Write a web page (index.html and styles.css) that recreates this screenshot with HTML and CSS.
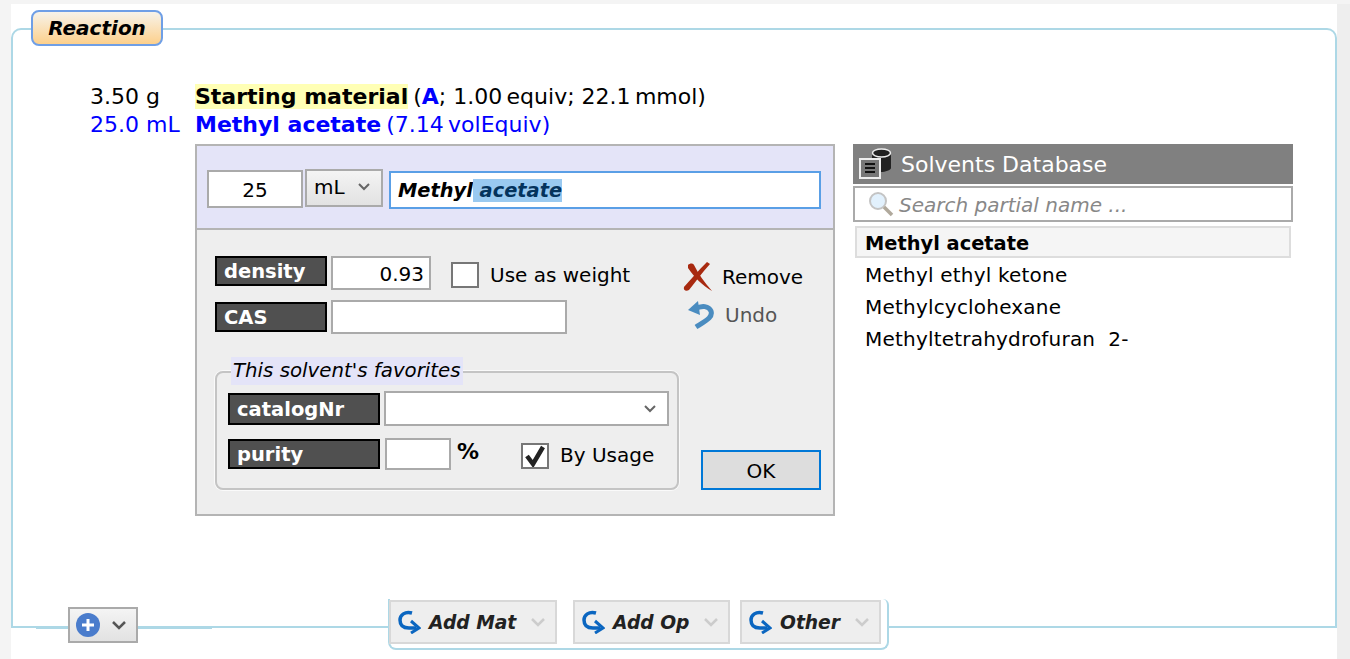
FILE: index.html
```html
<!DOCTYPE html>
<html lang="en">
<head>
    <meta charset="UTF-8">
    <meta name="viewport" content="width=device-width, initial-scale=1.0">
    <title>Reaction</title>
    <link rel="stylesheet" href="styles.css">
</head>
<body>
    <div class="sheet">
        <div class="tab">Reaction</div>

        <div class="panel">
            <!-- Materials -->
            <div class="mat-row">
                <div class="amount">3.50 g</div>
                <div><span class="mat-name hilite">Starting material</span><span class="mat-info">(<b class="letter">A</b>; 1.00&#8201;equiv; 22.1&#8201;mmol)</span></div>
            </div>
            <div class="mat-row blue">
                <div class="amount">25.0 mL</div>
                <div><span class="mat-name">Methyl acetate</span><span class="mat-info">(7.14&#8201;volEquiv)</span></div>
            </div>

            <div class="work">
                <!-- Editor -->
                <div class="editor">
                    <div class="editor-head">
                        <div class="field qty">25</div>
                        <div class="unit">mL <svg class="chev" width="12" height="8" viewBox="0 0 12 8"><path d="M1 1l5 5 5-5" fill="none" stroke="#666" stroke-width="2"/></svg></div>
                        <div class="name-input"><span>Methyl</span><span class="selected"> acetate</span></div>
                    </div>
                    <div class="editor-body">
                        <div class="props">
                            <div class="prop-row">
                                <div class="label density-label">density</div>
                                <div class="field density">0.93</div>
                                <div class="check"></div>
                                <div class="check-text">Use as weight</div>
                            </div>
                            <div class="prop-row cas-row">
                                <div class="label">CAS</div>
                                <div class="field cas"></div>
                            </div>
                            <div class="favorites">
                                <div class="legend">This solvent's favorites</div>
                                <div class="fav-row">
                                    <div class="label wide tall">catalogNr</div>
                                    <div class="field catalog"><svg class="chev" width="12" height="8" viewBox="0 0 12 8"><path d="M1 1l5 5 5-5" fill="none" stroke="#666" stroke-width="2"/></svg></div>
                                </div>
                                <div class="fav-row second">
                                    <div class="label wide">purity</div>
                                    <div class="field purity"></div>
                                    <b class="percent">%</b>
                                    <div class="check small">
                                        <svg width="24" height="22" viewBox="0 0 24 22"><path d="M4 11l6 8L20 2" fill="none" stroke="#222" stroke-width="4.5"/></svg>
                                    </div>
                                    <div class="check-text usage">By Usage</div>
                                </div>
                            </div>
                        </div>
                        <div class="actions">
                            <div class="action remove">
                                <svg width="30" height="30" viewBox="0 0 30 30"><path d="M1 25C8 17 15 9 24 0l3 2C19 11 13 19 6 28c-3 2-6 0-5-3z" fill="#a82a10"/><path d="M5 3c2-2 5-2 6 0 4 8 10 17 18 26C19 23 11 15 5 6z" fill="#a82a10"/></svg>
                                <span>Remove</span>
                            </div>
                            <div class="action undo">
                                <svg width="27" height="30" viewBox="0 0 27 30"><path d="M7 9c7-4 14-3 16 2 2 6-4 9-15 16" fill="none" stroke="#4a8cc0" stroke-width="5"/><path d="M0 10l10-9 2 14z" fill="#4a8cc0"/></svg>
                                <span>Undo</span>
                            </div>
                            <div class="ok">OK</div>
                        </div>
                    </div>
                </div>

                <!-- Solvents list -->
                <div class="solvents">
                    <div class="solvents-head">
                        <svg width="34" height="34" viewBox="0 0 34 34"><path d="M13 6v15c0 2 5 4 9 4s10-2 10-4V6z" fill="#222"/><ellipse cx="22.500" cy="6" rx="9" ry="4" fill="#222" stroke="#eee" stroke-width="1.500"/><rect x="1" y="12" width="20" height="19" fill="#777" stroke="#eee" stroke-width="2"/><path d="M6 17h10M6 21h10M6 25h10" stroke="#111" stroke-width="2"/></svg>
                        <span>Solvents Database</span>
                    </div>
                    <div class="search">
                        <svg width="28" height="28" viewBox="0 0 28 28"><circle cx="11" cy="11" r="8" fill="#e2f1fd" stroke="#c4c4c4" stroke-width="2"/><path d="M17 17l8 8" stroke="#b0a99c" stroke-width="3.500"/></svg>
                        <span class="hint">Search partial name ...</span>
                    </div>
                    <div class="sol-item current">Methyl acetate</div>
                    <div class="sol-item">Methyl ethyl ketone</div>
                    <div class="sol-item">Methylcyclohexane</div>
                    <div class="sol-item">Methyltetrahydrofuran&nbsp; 2-</div>
                </div>
            </div>
        </div>

        <!-- Things sitting on the panel's bottom border -->
        <div class="line-step"></div>
        <div class="plus-btn">
            <svg width="24" height="24" viewBox="0 0 24 24"><circle cx="12" cy="12" r="12" fill="#4a7ccc"/><path d="M12 6v12M6 12h12" stroke="#fff" stroke-width="3"/></svg>
            <svg class="chev" width="14" height="9" viewBox="0 0 14 9"><path d="M1 1l6 6 6-6" fill="none" stroke="#555" stroke-width="2.500"/></svg>
        </div>
        <div class="tray">
            <div class="add-btn mat">
                <svg class="arrow" width="24" height="24" viewBox="0 0 24 24"><path d="M15 3C8 1 3 5 3 10c0 5 3 8 9 8h7" fill="none" stroke="#0b66c0" stroke-width="3.500"/><path d="M14 11l8 7-8 5" fill="none" stroke="#0b66c0" stroke-width="3"/></svg>
                <span>Add Mat</span>
                <svg class="chev" width="14" height="9" viewBox="0 0 14 9"><path d="M1 1l6 6 6-6" fill="none" stroke="#ccc" stroke-width="2.500"/></svg>
            </div>
            <div class="add-btn op">
                <svg class="arrow" width="24" height="24" viewBox="0 0 24 24"><path d="M15 3C8 1 3 5 3 10c0 5 3 8 9 8h7" fill="none" stroke="#0b66c0" stroke-width="3.500"/><path d="M14 11l8 7-8 5" fill="none" stroke="#0b66c0" stroke-width="3"/></svg>
                <span>Add Op</span>
                <svg class="chev" width="14" height="9" viewBox="0 0 14 9"><path d="M1 1l6 6 6-6" fill="none" stroke="#ccc" stroke-width="2.500"/></svg>
            </div>
            <div class="add-btn other">
                <svg class="arrow" width="24" height="24" viewBox="0 0 24 24"><path d="M15 3C8 1 3 5 3 10c0 5 3 8 9 8h7" fill="none" stroke="#0b66c0" stroke-width="3.500"/><path d="M14 11l8 7-8 5" fill="none" stroke="#0b66c0" stroke-width="3"/></svg>
                <span>Other</span>
                <svg class="chev" width="14" height="9" viewBox="0 0 14 9"><path d="M1 1l6 6 6-6" fill="none" stroke="#ccc" stroke-width="2.500"/></svg>
            </div>
        </div>
    </div>
</body>
</html>
```

FILE: styles.css
```css
html, body {
    height: 100%;
}
body {
    margin: 0;
    background-color: #f4f4f4;
    color: #000;
    font: 20px "DejaVu Sans", sans-serif;
    overflow: hidden;
}
.sheet {
    position: relative;
    box-sizing: border-box;
    width: 1326px;
    height: 655px;
    margin: 4px 0 0 11px;
    padding-top: 24px;
    background-color: #fff;
    box-shadow: 13px 0 0 #eee;
}
.tab {
    position: absolute;
    left: 20px;
    top: 6px;
    box-sizing: border-box;
    width: 132px;
    height: 36px;
    border: 2px solid #6f9fe6;
    border-radius: 8px;
    background: linear-gradient(#f7f3ea, #fdd08c);
    font-size: 20px;
    font-weight: bold;
    font-style: italic;
    line-height: 33px;
    text-align: center;
}
.panel {
    box-sizing: border-box;
    height: 600px;
    padding: 53px 0 0 76px;
    border: 2px solid #add8e6;
    border-radius: 10px 10px 0 0;
}
.mat-row {
    display: flex;
    height: 28px;
    font-size: 22px;
    line-height: 28px;
    white-space: nowrap;
}
.blue {
    color: #00f;
}
.amount {
    box-sizing: border-box;
    width: 106px;
    padding-left: 1px;
}
.mat-name {
    font-weight: bold;
}
.mat-info {
    margin-left: 5px;
}
.hilite {
    background-color: #ffffb5;
}
.letter {
    color: #00f;
}
.mat-row.blue .mat-name {
    color: #00f;
}
.work {
    display: flex;
    align-items: flex-start;
    gap: 18px;
    margin: 5px 0 0 106px;
}

/* editor dialog */
.editor {
    box-sizing: border-box;
    width: 640px;
    height: 372px;
    border: 2px solid #b4b4b4;
    background-color: #eee;
}
.editor-head {
    display: flex;
    align-items: center;
    gap: 2px;
    box-sizing: border-box;
    height: 84px;
    padding: 4px 0 0 10px;
    border-bottom: 2px solid #b4b4b4;
    background-color: #e4e4f8;
}
.field {
    box-sizing: border-box;
    border: 2px solid #aaa;
    background-color: #fff;
}
.qty {
    width: 96px;
    height: 38px;
    line-height: 36px;
    text-align: center;
}
.unit {
    display: flex;
    align-items: center;
    gap: 13px;
    box-sizing: border-box;
    width: 78px;
    height: 38px;
    margin-top: -2px;
    padding: 0 0 2px 7px;
    border: 2px solid #aaa;
    background: linear-gradient(#f4f4f4, #e2e2e2);
}
.name-input {
    box-sizing: border-box;
    width: 432px;
    height: 38px;
    margin: 2px 0 0 4px;
    padding-left: 7px;
    border: 2px solid #5a9fe6;
    background-color: #fff;
    font-size: 19.400px;
    font-weight: bold;
    font-style: italic;
    line-height: 36px;
    white-space: pre;
}
.selected {
    background-color: #99c9f0;
    color: #04335c;
}
.editor-body {
    display: flex;
    padding: 26px 0 0 18px;
}
.props {
    width: 466px;
}
.prop-row {
    display: flex;
    align-items: center;
}
.cas-row {
    margin-top: 10px;
}
.label {
    box-sizing: border-box;
    width: 112px;
    height: 30px;
    padding-left: 7px;
    border: 2px solid #000;
    background-color: #505050;
    color: #fff;
    font-size: 19.500px;
    font-weight: bold;
    line-height: 27px;
}
.density-label {
    align-self: flex-start;
}
.density {
    width: 100px;
    height: 34px;
    margin-left: 4px;
    padding-right: 5px;
    line-height: 32px;
    text-align: right;
}
.cas {
    width: 236px;
    height: 34px;
    margin-left: 4px;
}
.check {
    box-sizing: border-box;
    width: 28px;
    height: 26px;
    margin: 4px 0 0 20px;
    border: 2px solid #777;
    background-color: #fff;
}
.check-text {
    margin: 4px 0 0 11px;
}
.favorites {
    position: relative;
    box-sizing: border-box;
    width: 464px;
    height: 119px;
    margin-top: 37px;
    padding: 18px 0 0 11px;
    border: 2px solid #c4c4c4;
    border-radius: 8px;
    box-shadow: 0 0 0 1px #fafafa;
}
.legend {
    position: absolute;
    left: 14px;
    top: -16px;
    height: 28px;
    padding: 0 2px;
    background-color: #e4e4f8;
    font-size: 19.800px;
    font-style: italic;
    line-height: 28px;
    white-space: nowrap;
}
.fav-row {
    display: flex;
    align-items: center;
}
.fav-row.second {
    margin-top: 12px;
}
.label.wide {
    width: 152px;
}
.label.tall {
    height: 32px;
    line-height: 29px;
}
.catalog {
    display: flex;
    align-items: center;
    justify-content: flex-end;
    width: 285px;
    height: 35px;
    margin-left: 4px;
    padding-right: 11px;
}
.purity {
    width: 66px;
    height: 32px;
    margin-left: 5px;
}
.percent {
    margin: -5px 0 0 6px;
    font-size: 22px;
}
.check.small {
    width: 28px;
    margin: 4px 0 0 42px;
}
.check.small svg {
    display: block;
}
.check-text.usage {
    margin-top: 2px;
}
.actions {
    position: relative;
    flex: 1;
}
.action {
    display: flex;
    align-items: center;
    height: 30px;
}
.remove {
    gap: 9px;
    margin: 6px 0 0 2px;
}
.undo {
    gap: 10px;
    margin: 8px 0 0 7px;
    color: #555;
}
.ok {
    position: absolute;
    left: 20px;
    top: 194px;
    box-sizing: border-box;
    width: 120px;
    height: 40px;
    border: 2px solid #0078d7;
    background-color: #ddd;
    line-height: 39px;
    text-align: center;
}

/* solvents list */
.solvents {
    width: 440px;
}
.solvents-head {
    display: flex;
    align-items: center;
    gap: 8px;
    box-sizing: border-box;
    height: 40px;
    padding-left: 6px;
    background-color: #808080;
    color: #fff;
    font-size: 22px;
}
.search {
    display: flex;
    align-items: center;
    gap: 4px;
    box-sizing: border-box;
    height: 36px;
    margin-top: 2px;
    padding-left: 12px;
    border: 2px solid #aaa;
    color: #888;
    font-style: italic;
}
.hint {
    padding-top: 1px;
}
.sol-item {
    box-sizing: border-box;
    height: 32px;
    padding-left: 8px;
    line-height: 31px;
    margin: 0 2px;
    border: 2px solid transparent;
    letter-spacing: 0.200px;
}
.sol-item.current {
    margin-top: 4px;
    border-color: #ddd;
    background-color: #f5f5f5;
    font-size: 19.400px;
    font-weight: bold;
    letter-spacing: 0;
}

/* bottom of the panel */
.line-step {
    position: absolute;
    left: 25px;
    top: 623px;
    width: 176px;
    height: 2px;
    background-color: #add8e6;
}
.plus-btn {
    position: absolute;
    left: 57px;
    top: 603px;
    display: flex;
    align-items: center;
    gap: 12px;
    box-sizing: border-box;
    width: 70px;
    height: 36px;
    padding-left: 6px;
    border: 2px solid #aaa;
    background: linear-gradient(#f4f4f4, #e2e2e2);
}
.tray {
    position: absolute;
    left: 377px;
    top: 595px;
    display: flex;
    box-sizing: border-box;
    width: 501px;
    height: 51px;
    border: 2px solid #add8e6;
    border-top: 0;
    border-radius: 0 6px 8px 8px;
    background-color: #fff;
}
.add-btn {
    display: flex;
    align-items: center;
    box-sizing: border-box;
    height: 44px;
    margin-top: 1px;
    padding-left: 6px;
    border: 2px solid #d8d8d8;
    background-color: #eee;
    color: #222;
    font-size: 18.700px;
    font-weight: bold;
    font-style: italic;
}
.add-btn span {
    margin-left: 8px;
}
.add-btn .chev {
    margin-left: auto;
    margin-right: 10px;
}
.add-btn.mat {
    width: 168px;
    margin-left: -1px;
}
.add-btn.op {
    width: 157px;
    margin-left: 16px;
}
.add-btn.other {
    width: 141px;
    margin-left: 10px;
}
```
